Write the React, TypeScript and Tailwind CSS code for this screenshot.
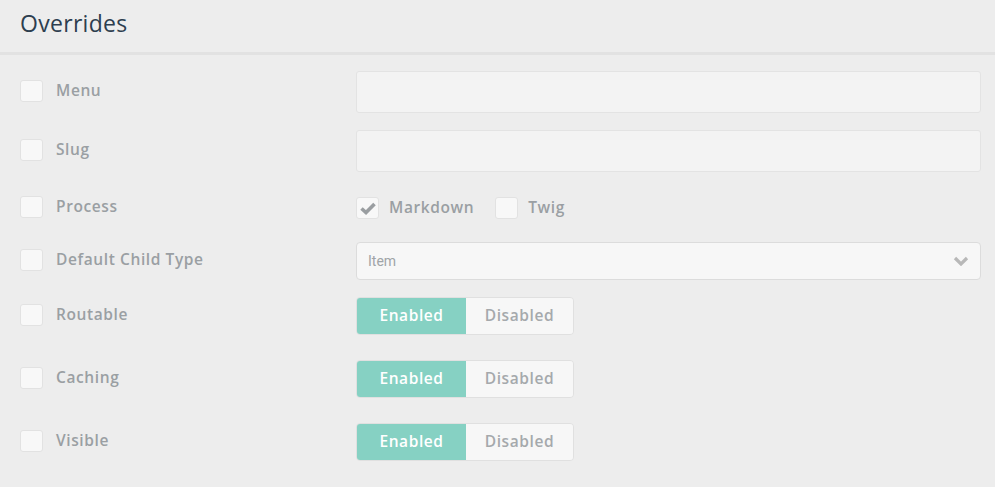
import { ReactNode } from "react";

const font = { fontFamily: '"Open Sans", "DejaVu Sans", sans-serif' };

function Box({ checked = false }: { checked?: boolean }) {
  return (
    <span className="flex h-[22px] w-[23px] shrink-0 items-center justify-center rounded-[3px] border border-[#e2e2e2] bg-[#f8f8f8]">
      {checked && (
        <svg width="16" height="13" viewBox="0 0 16 13">
          <path d="M1.5 6.5 L6 10.5 L14.5 2" fill="none" stroke="#9a9ea1" strokeWidth="3.6" strokeLinejoin="miter" />
        </svg>
      )}
    </span>
  );
}

function Toggle() {
  return (
    <div className="flex h-[38px] w-[218px] overflow-hidden rounded-[4px] border border-[#e0e0e0] text-[15.5px] font-semibold tracking-[0.6px]">
      <div className="flex w-[109px] items-center justify-center bg-[#86d1c3] text-white">Enabled</div>
      <div className="flex flex-1 items-center justify-center bg-[#f7f7f7] text-[#a5a9ac]">Disabled</div>
    </div>
  );
}

function Row({ label, className, children }: { label: string; className: string; children: ReactNode }) {
  return (
    <div className={`flex items-center ${className}`}>
      <div className="flex w-[356px] items-center gap-[13px] pl-5 pb-[2px]">
        <Box />
        <span className="text-[15.5px] font-semibold tracking-[0.6px] text-[#9a9fa3]">{label}</span>
      </div>
      {children}
    </div>
  );
}

export default function App() {
  return (
    <div className="h-[487px] bg-[#ededed] pr-[14px]" style={font}>
      <div className="-mr-[14px] flex h-[55px] items-start border-b-[3px] border-[#e2e2e2] px-5 pt-[6px]">
        <h2 className="text-[23px] tracking-[0.3px] text-[#2d3e4f]">Overrides</h2>
      </div>

      <Row label="Menu" className="mt-[16px] h-[42px]">
        <div className="h-[42px] flex-1 rounded-[3px] border border-[#e3e3e3] bg-[#f3f3f3]" />
      </Row>
      <Row label="Slug" className="mt-[17px] h-[42px]">
        <div className="h-[42px] flex-1 rounded-[3px] border border-[#e3e3e3] bg-[#f3f3f3]" />
      </Row>
      <Row label="Process" className="mt-[24px] h-[24px]">
        <div className="flex items-center text-[15.5px] font-semibold tracking-[0.6px] text-[#9a9fa3]">
          <Box checked />
          <span className="ml-[10px]">Markdown</span>
          <span className="ml-[21px]"><Box /></span>
          <span className="ml-[10px]">Twig</span>
        </div>
      </Row>
      <Row label="Default Child Type" className="mt-[22px] h-[38px]">
        <div className="flex h-[38px] flex-1 items-center justify-between rounded-[4px] border border-[#dcdcdc] bg-[#f7f7f7] pl-[11px] pr-[11px]">
          <span className="text-[14px] text-[#a0a4a7]" style={{ fontFamily: '"Liberation Sans Narrow", "Roboto", sans-serif' }}>
            Item
          </span>
          <svg width="16" height="10" viewBox="0 0 16 10">
            <path d="M2 2 L8 8 L14 2" fill="none" stroke="#b8b8b8" strokeWidth="3.2" />
          </svg>
        </div>
      </Row>
      <Row label="Routable" className="mt-[17px] h-[38px]">
        <Toggle />
      </Row>
      <Row label="Caching" className="mt-[25px] h-[38px]">
        <Toggle />
      </Row>
      <Row label="Visible" className="mt-[25px] h-[38px]">
        <Toggle />
      </Row>
    </div>
  );
}
